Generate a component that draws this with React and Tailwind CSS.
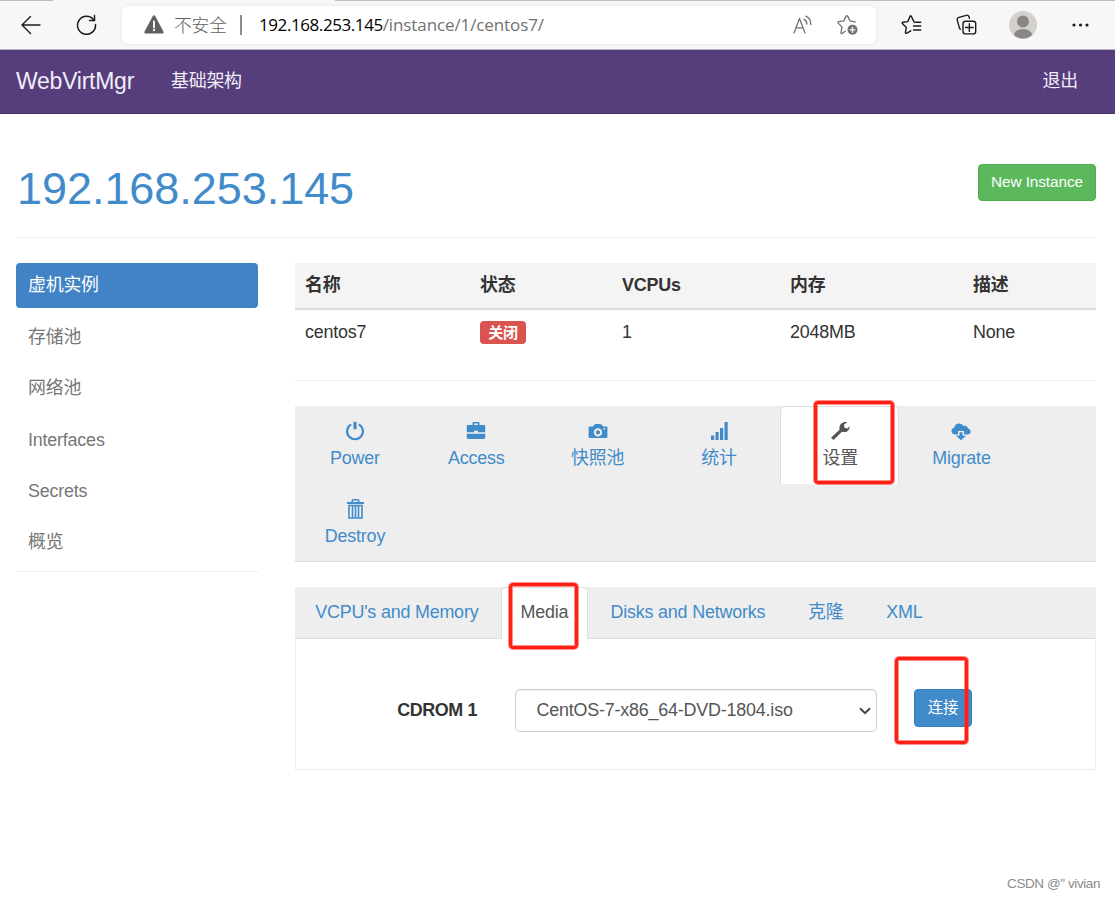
import React, { useState } from "react";

const TriangleWarning = () => (
  <svg width="20" height="19" viewBox="0 0 20 19">
    <path d="M8.8 1a1.4 1.4 0 0 1 2.4 0l8.2 15.6a1.3 1.3 0 0 1-1.2 2H1.8a1.3 1.3 0 0 1-1.2-2z" fill="#606060" />
    <path d="M10 6.5v6" stroke="#fff" strokeWidth="1.8" strokeLinecap="round" />
    <circle cx="10" cy="15.2" r="1.1" fill="#fff" />
  </svg>
);

const ReadAloud = () => (
  <svg width="20" height="20" viewBox="0 0 20 20" fill="none" stroke="#717171" strokeWidth="1.3" strokeLinecap="round" strokeLinejoin="round">
    <path d="M1 18 6.5 3.5 12 18M3 12.8h7" />
    <path d="M11 4.3c1.8.9 2.8 2.6 2.9 4.8M12.8 1.2c3.2 1.3 5 4.2 5 8.3" />
  </svg>
);

const StarAdd = () => (
  <svg width="22" height="22" viewBox="0 0 22 22" fill="none" stroke="#717171" strokeWidth="1.3" strokeLinejoin="round" strokeLinecap="round">
    <path d="M8.4 17.3 5 19.5c-.6.3-1.1-.1-1-.7l.9-5.9-3.8-4c-.4-.5-.2-1.1.4-1.2l5.2-.8 2.6-5c.3-.5.9-.5 1.2 0l2.5 5 5.2.9" />
    <circle cx="15.5" cy="15.8" r="5" fill="#717171" stroke="none" />
    <path d="M15.5 13.3v5M13 15.8h5" stroke="#fff" />
  </svg>
);

const Favorites = () => (
  <svg width="21" height="21" viewBox="0 0 21 21" fill="none" stroke="#1b1b1b" strokeWidth="1.4" strokeLinejoin="round" strokeLinecap="round">
    <path d="M9.8 16.8 5.4 19.3c-.6.3-1.1-.1-1-.7l.9-5.2-3.9-4c-.4-.4-.2-1 .4-1.1l5-.7L9.2 2c.3-.5.8-.5 1 0l2.5 5.400" />
    <path d="M13.500 8.200h6.200M12.5 12h7.2M12.5 16h7.2" />
  </svg>
);

const Collections = () => (
  <svg width="21" height="21" viewBox="0 0 21 21" fill="none" stroke="#1b1b1b" strokeWidth="1.4" strokeLinejoin="round" strokeLinecap="round">
    <path d="M4.4 15.3 3.6 14.6 1.3 6.4C.9 5 1.6 3.8 2.9 3.4l7.4-2.1c1.3-.4 2.3.2 2.7 1.4l.5 1.7" />
    <rect x="7" y="7.2" width="12.7" height="12.7" rx="2.4" />
    <path d="M13.35 9.7v7.7M9.5 13.55h7.7" />
  </svg>
);

const BrowserBar = () => (
  <div className="relative flex h-[50px] items-center border-b border-[#b5b5b5] bg-[#f7f7f7]">
    {/* bottom edges of the tab strip */}
    <div className="absolute inset-x-0 top-0 flex h-px justify-between">
      <div className="w-[53px] bg-[#bdbdbd]" />
      <div className="w-[780px] bg-[#bdbdbd]" />
    </div>
    <svg className="ml-[21px] shrink-0" width="21" height="20" viewBox="0 0 21 20" fill="none" stroke="#1b1b1b" strokeWidth="1.4" strokeLinecap="round" strokeLinejoin="round">
      <path d="M19 10H1M9.500 1.5 1 10l8.5 8.5" />
    </svg>
    <svg className="ml-[34px] shrink-0" width="21" height="21" viewBox="0 0 21 21" fill="none" stroke="#1b1b1b" strokeWidth="1.5" strokeLinecap="round" strokeLinejoin="round">
      <path d="M17.800 6A9 9 0 1 0 19.5 10.500" />
      <path d="M18.500 1.500V6.500H13.500" />
    </svg>
    <div className="ml-[25px] flex h-[38px] w-[754px] items-center rounded-md bg-white shadow-[0_0_4px_rgba(0,0,0,0.08)]">
      <span className="ml-[22px]"><TriangleWarning /></span>
      <span className="ml-2.5 w-[54px] whitespace-nowrap pb-px font-['Noto_Sans_CJK_SC',sans-serif] text-[17.8px] font-light leading-6 text-[#606060]">不安全</span>
      <span className="ml-[12px] h-5 w-[2px] bg-[#8c8c8c]" />
      <span className="ml-[17px] whitespace-nowrap font-['Open_Sans',sans-serif] text-[17px] leading-6 tracking-[-0.11px] text-[#717171]">
        <span className="tracking-[-0.42px] text-black">192.168.253.145</span>/instance/1/centos7/
      </span>
      <span className="ml-auto"><ReadAloud /></span>
      <span className="ml-[24px] mr-[17px]"><StarAdd /></span>
    </div>
    <span className="ml-[25px]"><Favorites /></span>
    <span className="ml-[34px]"><Collections /></span>
    <svg className="ml-[32px]" width="28" height="28" viewBox="0 0 28 28">
      <defs>
        <clipPath id="avatar"><circle cx="14" cy="14" r="13.5" /></clipPath>
      </defs>
      <circle cx="14" cy="14" r="14" fill="#d3d1ce" />
      <g clipPath="url(#avatar)" fill="#8b8683">
        <circle cx="14" cy="10.5" r="6" />
        <ellipse cx="14" cy="25" rx="9.5" ry="7" />
      </g>
    </svg>
    <svg className="ml-[35px]" width="18" height="4" viewBox="0 0 18 4" fill="#1b1b1b">
      <circle cx="2" cy="2" r="1.6" />
      <circle cx="8.5" cy="2" r="1.6" />
      <circle cx="15" cy="2" r="1.6" />
    </svg>
  </div>
);

const PowerIcon = () => (
  <svg width="20" height="20" viewBox="0 0 20 20" fill="none" stroke="currentColor">
    <path d="M6.2 3.4A7.9 7.9 0 1 0 13.8 3.4" strokeWidth="2.2" />
    <path d="M10 .8v7.4" strokeWidth="3.2" />
  </svg>
);

const BriefcaseIcon = () => (
  <svg width="20" height="20" viewBox="0 0 20 20" fill="currentColor">
    <path d="M6.5 4V2.2C6.5 1.500 7 1 7.7 1h4.6c.7 0 1.2.5 1.200 1.200V4H18c.7 0 1.200.5 1.200 1.200v6H12V9.800H8v1.400H.8v-6C.8 4.500 1.300 4 2 4zM8.200 4h3.600V2.500H8.200z" />
    <path d="M.8 12.700h18.400v3.800c0 .9-.6 1.500-1.500 1.500H2.300c-.9 0-1.500-.6-1.500-1.500z" />
  </svg>
);

const CameraIcon = () => (
  <svg width="20" height="20" viewBox="0 0 20 20" fill="currentColor" fillRule="evenodd">
    <path d="M1.5 5.5h3.200L6.500 3.600c.3-.4.700-.6 1.200-.6h4.600c.5 0 .9.200 1.200.6l1.800 1.900h3.200c.6 0 .9.400.9.900V16c0 .6-.4 1-.9 1H1.500c-.6 0-.9-.4-.9-1V6.500c0-.6.4-1 .9-1zM10 7.200a4.200 4.200 0 1 0 0 8.400 4.200 4.200 0 0 0 0-8.400zM15.500 7v1.500H17V7z" />
    <circle cx="10" cy="11.4" r="2.100" />
  </svg>
);

const SignalIcon = () => (
  <svg width="20" height="20" viewBox="0 0 20 20" fill="currentColor">
    <path d="M2 14.500h3.200V19H2zM6.500 11h3.200v8H6.500zM11 7h3.200v12H11zM15.500 1h3.200v18h-3.200z" />
  </svg>
);

const WrenchIcon = () => (
  <svg width="20" height="20" viewBox="0 0 20 20" fill="currentColor">
    <path d="M1 16.700 9.500 8.800C9 6.300 9.700 3.700 11.700 2.200 13.500.8 15.700.6 17.400 1.300L14 3.500l.5 3.200 3 .8 2-2.200c.3 1.900-.4 3.500-1.800 4.600-1.700 1.300-3.800 1.500-5.700.9L3.500 19z" />
  </svg>
);

const CloudDownloadIcon = () => (
  <svg width="20" height="20" viewBox="0 0 20 20" fill="currentColor">
    <path d="M7 13.500H4.300C2.100 13.500.5 12 .5 10c0-1.700 1.100-3 2.800-3.400C3.400 4.100 5.600 2.400 8.100 2.500c1.900 0 3.500 1 4.200 2.400 2-.7 4.300.4 4.600 2.500 1.600.2 2.700 1.500 2.700 3.100 0 1.700-1.300 3-3 3H13V10H7z" />
    <path d="M8.500 11.200h3v3.600H15L10 19.300 5 14.800h3.500z" />
  </svg>
);

const TrashIcon = () => (
  <svg width="20" height="22" viewBox="0 0 20 22" fill="none" stroke="currentColor">
    <path d="M2 5h17" strokeWidth="2" />
    <path d="M7.300 4V2.700C7.300 2 7.800 1.700 8.300 1.700h4.400c.5 0 1 .3 1 1V4" strokeWidth="1.600" />
    <path d="M4 7.500v12.500h13V7.500z" strokeWidth="1.600" />
    <path d="M7.500 7v13M10.500 7v13M13.500 7v13" strokeWidth="1.600" />
  </svg>
);

const menu = ["虚机实例", "存储池", "网络池", "Interfaces", "Secrets", "概览"];

const actions = [
  { label: "Power", Icon: PowerIcon },
  { label: "Access", Icon: BriefcaseIcon },
  { label: "快照池", Icon: CameraIcon },
  { label: "统计", Icon: SignalIcon },
  { label: "设置", Icon: WrenchIcon },
  { label: "Migrate", Icon: CloudDownloadIcon },
  { label: "Destroy", Icon: TrashIcon },
];

const tabs = ["VCPU's and Memory", "Media", "Disks and Networks", "克隆", "XML"];

const App = () => {
  const [action, setAction] = useState("设置");
  const [tab, setTab] = useState("Media");

  return (
    <div className="relative h-[898px] w-[1115px] overflow-hidden bg-white font-['Liberation_Sans','Noto_Sans_CJK_SC',sans-serif] text-[17.92px] leading-[25.6px] tracking-[-0.2px] text-[#333]">
      <BrowserBar />

      {/* Navbar */}
      <nav className="flex h-16 items-center border-b border-[#463265] bg-[#563d7c] px-4 text-[#f1edf7]">
        <span className="w-[155px] text-[23px] tracking-[-0.25px]">WebVirtMgr</span>
        <span>基础架构</span>
        <span className="ml-auto mr-[21px] pt-px">退出</span>
      </nav>

      <main className="mx-4 w-[1080px]">
        <div className="flex h-[124px] items-start justify-between border-b border-[#eee]">
          <h1 className="ml-px mt-[50px] text-[45px] leading-[50px] tracking-[-0.05px] text-[#428bca]">192.168.253.145</h1>
          <button className="mt-[50px] h-[37px] w-[118px] rounded-[4px] border border-[#4cae4c] bg-[#5cb85c] pb-px text-[15.36px] leading-[20px] tracking-[-0.1px] text-white">
            New Instance
          </button>
        </div>

        <div className="mt-[25px] flex">
          {/* Sidebar */}
          <aside className="h-[309px] w-[242px] border-b border-[#eee]">
            {menu.map((item, i) => (
              <div
                key={item}
                className={
                  i === 0
                    ? "mb-[6.4px] h-[45px] rounded-[4px] bg-[#4183c4] px-3 py-[10px] text-white"
                    : "mb-[6.4px] h-[45px] px-3 py-[10.5px] text-[#777]"
                }
              >
                {item}
              </div>
            ))}
          </aside>

          <section className="ml-[37px] w-[801px]">
            <table className="w-full table-fixed border-collapse text-left">
              <colgroup>
                <col className="w-[175px]" />
                <col className="w-[141px]" />
                <col className="w-[169px]" />
                <col className="w-[183px]" />
                <col />
              </colgroup>
              <thead>
                <tr className="h-[46px] border-b-2 border-[#ddd] bg-[#f4f4f4]">
                  <th className="px-2.5">名称</th>
                  <th className="px-2.5">状态</th>
                  <th className="px-[11px]">VCPUs</th>
                  <th className="px-2.5">内存</th>
                  <th className="px-2.5">描述</th>
                </tr>
              </thead>
              <tbody>
                <tr className="h-[46px]">
                  <td className="px-2.5">centos7</td>
                  <td className="px-2.5">
                    <div className="h-[23px] w-[46px] rounded-[4px] bg-[#d9534f] text-center text-[15px] font-bold leading-[23px] text-white">关闭</div>
                  </td>
                  <td className="px-[11px]">1</td>
                  <td className="px-2.5">2048MB</td>
                  <td className="px-2.5">None</td>
                </tr>
              </tbody>
            </table>

            <hr className="mt-[25px] border-[#eee]" />

            {/* Instance actions */}
            <div className="mt-[25px] flex h-[156px] flex-wrap content-start gap-x-[2.3px] border-b border-[#ddd] bg-[#eee]">
              {actions.map(({ label, Icon }) => (
                <button
                  key={label}
                  onClick={() => setAction(label)}
                  className={
                    action === label
                      ? "flex h-[78px] w-[119px] flex-col items-center rounded-t-[5px] border border-b-0 border-[#ddd] bg-white pl-px pt-[14px] text-[#555]"
                      : "flex h-[78px] w-[119px] flex-col items-center pl-px pt-[15px] text-[#428bca]"
                  }
                >
                  <span className="flex h-5 items-center"><Icon /></span>
                  <span className="mt-[5px]">{label}</span>
                </button>
              ))}
            </div>

            {/* Settings tabs */}
            <div className="mt-[25px] flex h-[52px] gap-[2.5px] border-b border-[#ddd] bg-[#eee]">
              {tabs.map((name) => (
                <button
                  key={name}
                  onClick={() => setTab(name)}
                  className={
                    tab === name
                      ? "h-[52px] rounded-t-[5px] border border-b-0 border-[#ddd] bg-white px-[18.5px] pb-[2px] text-[#555]"
                      : "h-[52px] px-[20.2px] pb-px text-[#428bca]"
                  }
                >
                  {name}
                </button>
              ))}
            </div>
            <div className="flex h-[131px] items-start border border-t-0 border-[#eee] pt-[50px]">
              <label className="mt-[9px] w-[181px] text-right font-bold tracking-[-0.4px]">CDROM 1</label>
              <div className="ml-[38px] flex h-[43px] w-[362px] items-center justify-between rounded-[5px] border border-[#ccc] pl-[20.5px] pr-[5px] text-[#555] shadow-[inset_0_1px_1px_rgba(0,0,0,0.075)]">
                <span>CentOS-7-x86_64-DVD-1804.iso</span>
                <svg width="12" height="8" viewBox="0 0 12 8" fill="none" stroke="#444" strokeWidth="2">
                  <path d="m1 1.2 5 5 5-5" />
                </svg>
              </div>
              <button className="ml-[37px] h-[38px] w-[58px] rounded-[4px] border border-[#357ebd] bg-[#428bca] text-[15.36px] leading-[20px] text-white">
                连接
              </button>
            </div>
          </section>
        </div>
      </main>

      {/* Highlight frames */}
      <div className="absolute left-[814px] top-[401px] h-[83px] w-[80px] rounded-[4px] border-3 border-[#ff2015] ring-1 ring-[#ff2015]/50 inset-ring inset-ring-[#ff2015]/50" />
      <div className="absolute left-[509px] top-[583px] h-[66px] w-[69px] rounded-[4px] border-3 border-[#ff2015] ring-1 ring-[#ff2015]/50 inset-ring inset-ring-[#ff2015]/50" />
      <div className="absolute left-[895px] top-[657px] h-[87px] w-[73px] rounded-[4px] border-3 border-[#ff2015] ring-1 ring-[#ff2015]/50 inset-ring inset-ring-[#ff2015]/50" />

      <div className="absolute right-[15px] top-[874px] text-[13.5px] leading-5 tracking-[-0.42px] text-[#8c8c8c]">CSDN @" vivian</div>
    </div>
  );
};

export default App;
